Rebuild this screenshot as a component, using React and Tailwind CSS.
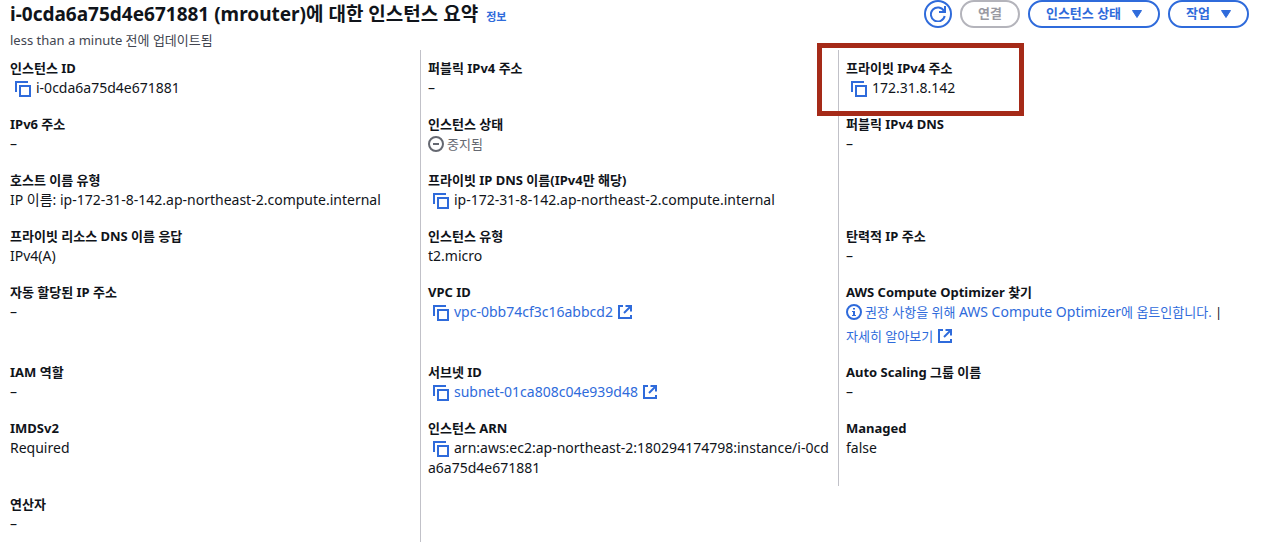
import { clsx } from 'clsx';

const CopyIcon = () => (
  <svg className="size-4" viewBox="0 0 16 16" fill="none" stroke="currentColor" strokeWidth="2" aria-hidden="true">
    <path d="M1 11V1h12" />
    <path d="M5 5h10v10H5z" />
  </svg>
);

const ExternalIcon = () => (
  <svg className="inline-block size-4 align-[-3px]" viewBox="0 0 16 16" fill="none" stroke="currentColor" strokeWidth="2" aria-hidden="true">
    <path d="M6 2H2v12h12v-3" />
    <path d="M8.5 2H14v5.5" />
    <path d="M7 9l7-7" />
  </svg>
);

const InfoIcon = () => (
  <svg className="mr-[3px] inline-block size-4 align-[-3px]" viewBox="0 0 16 16" fill="none" aria-hidden="true">
    <circle cx="8" cy="8" r="7" stroke="currentColor" strokeWidth="2" />
    <path d="M7 4h2v1.6H7zM6 7h3v4h1v1H6v-1h1V8H6z" fill="currentColor" />
  </svg>
);

const StoppedIcon = () => (
  <svg className="mr-[3px] inline-block size-4 align-[-3px]" viewBox="0 0 16 16" fill="none" stroke="currentColor" strokeWidth="2" aria-hidden="true">
    <circle cx="8" cy="8" r="7" />
    <path d="M5 8h6" />
  </svg>
);

const RefreshIcon = () => (
  <svg className="size-4" viewBox="0 0 16 16" fill="none" stroke="currentColor" strokeWidth="2" aria-hidden="true">
    <path d="M14.7 10A7 7 0 1 1 14 5" />
    <path d="M15 0v6H9" />
  </svg>
);

function CopyButton({ label }) {
  return (
    <button type="button" aria-label={`${label} 복사`} className="mx-[5px] inline-block align-[-4px] text-[#2f6bdb]">
      <CopyIcon />
    </button>
  );
}

function Field({ label, children, copy, divider, ko, highlight }) {
  return (
    <div className={clsx('relative px-[7px] py-2', divider && 'border-r border-[#c1c1c8]')}>
      <dt className="text-[13px] leading-5 font-bold">{label}</dt>
      <dd className={clsx('leading-5 break-all', ko ? 'text-[13px]' : 'text-sm')}>
        {copy && <CopyButton label={label} />}
        {children ?? '–'}
      </dd>
      {highlight && <div className="pointer-events-none absolute -top-[7px] -bottom-[10px] -left-[22px] z-10 w-[207px] border-5 border-[#a52a18]" />}
    </div>
  );
}

function ExternalLink({ children }) {
  return (
    <a href="#" className="text-[#2f6bdb]">
      {children} <ExternalIcon />
    </a>
  );
}

function PillButton({ children, caret, disabled }) {
  return (
    <button
      type="button"
      disabled={disabled}
      className={clsx(
        'flex h-7 items-center gap-[11px] rounded-full border-2 px-4 text-[13px] font-bold',
        disabled ? 'border-[#b4b4bb] text-[#9a9aa2]' : 'border-[#2f6bdb] text-[#2f6bdb]'
      )}
    >
      {children}
      {caret && (
        <svg className="h-2 w-[10px]" viewBox="0 0 10 8" fill="currentColor" stroke="currentColor" strokeLinejoin="round" aria-hidden="true">
          <path d="M.5.5h9L5 7.5z" />
        </svg>
      )}
    </button>
  );
}

export default function App() {
  return (
    <main className="bg-white pb-[3px] font-['Noto_Sans','Noto_Sans_CJK_KR',sans-serif] text-[#10141a]">
      <header className="flex items-start justify-between pr-[18px] pl-[10px]">
        <div>
          <div className="flex h-7 items-baseline gap-2">
            <h1 className="text-[19px] leading-7 font-bold">i-0cda6a75d4e671881 (mrouter)에 대한 인스턴스 요약</h1>
            <a href="#" className="text-[11px] leading-4 font-bold text-[#2f6bdb]">정보</a>
          </div>
          <p className="pt-0.5 text-[13px] leading-5 text-[#424650]">less than a minute 전에 업데이트됨</p>
        </div>
        <div className="flex gap-2">
          <button type="button" aria-label="새로 고침" className="flex size-7 items-center justify-center rounded-full border-2 border-[#2f6bdb] text-[#2f6bdb]">
            <RefreshIcon />
          </button>
          <PillButton disabled>연결</PillButton>
          <PillButton caret>인스턴스 상태</PillButton>
          <PillButton caret>작업</PillButton>
        </div>
      </header>

      <dl className="grid grid-cols-3 pr-[10px] pl-[3px]">
        <Field label="인스턴스 ID" copy divider>i-0cda6a75d4e671881</Field>
        <Field label="퍼블릭 IPv4 주소" divider />
        <Field label="프라이빗 IPv4 주소" copy highlight>172.31.8.142</Field>

        <Field label="IPv6 주소" divider />
        <Field label="인스턴스 상태" ko divider>
          <span className="text-[#656871]"><StoppedIcon />중지됨</span>
        </Field>
        <Field label="퍼블릭 IPv4 DNS" />

        <Field label="호스트 이름 유형" divider>IP 이름: ip-172-31-8-142.ap-northeast-2.compute.internal</Field>
        <Field label="프라이빗 IP DNS 이름(IPv4만 해당)" copy divider>ip-172-31-8-142.ap-northeast-2.compute.internal</Field>
        <div />

        <Field label="프라이빗 리소스 DNS 이름 응답" divider>IPv4(A)</Field>
        <Field label="인스턴스 유형" divider>t2.micro</Field>
        <Field label="탄력적 IP 주소" />

        <Field label="자동 할당된 IP 주소" divider />
        <Field label="VPC ID" copy divider><ExternalLink>vpc-0bb74cf3c16abbcd2</ExternalLink></Field>
        <Field label="AWS Compute Optimizer 찾기" ko>
          <div>
            <a href="#" className="text-[#2f6bdb]">
              <InfoIcon />권장 사항을 위해 <span className="text-sm leading-5">AWS Compute Optimizer</span>에 옵트인합니다.
            </a>{' '}
            |
          </div>
          <div className="mt-1"><ExternalLink>자세히 알아보기</ExternalLink></div>
        </Field>

        <Field label="IAM 역할" divider />
        <Field label="서브넷 ID" copy divider><ExternalLink>subnet-01ca808c04e939d48</ExternalLink></Field>
        <Field label="Auto Scaling 그룹 이름" />

        <Field label="IMDSv2" divider>Required</Field>
        <Field label="인스턴스 ARN" copy divider>arn:aws:ec2:ap-northeast-2:180294174798:instance/i-0cda6a75d4e671881</Field>
        <Field label="Managed">false</Field>

        <Field label="연산자" divider />
      </dl>
    </main>
  );
}
